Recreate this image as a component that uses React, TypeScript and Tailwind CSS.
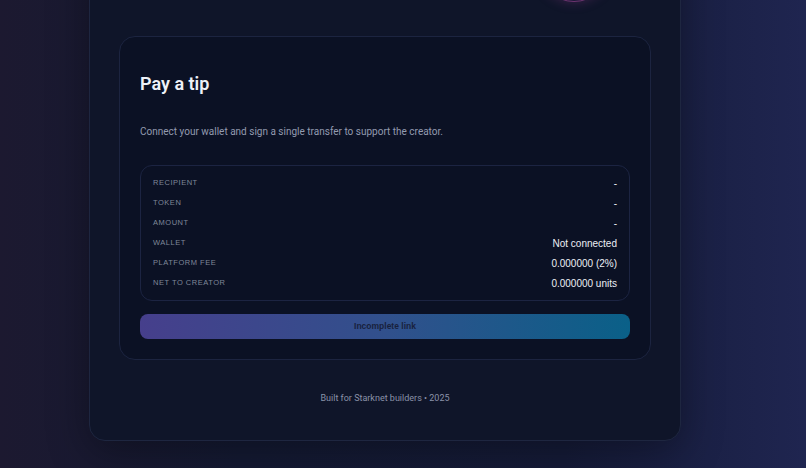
import React from "react";

const rows: { label: string; value: string }[] = [
  { label: "Recipient", value: "-" },
  { label: "Token", value: "-" },
  { label: "Amount", value: "-" },
  { label: "Wallet", value: "Not connected" },
  { label: "Platform fee", value: "0.000000 (2%)" },
  { label: "Net to creator", value: "0.000000 units" },
];

const App: React.FC = () => {
  return (
    <div className="h-[468px] w-[806px] overflow-hidden bg-[linear-gradient(90deg,#1c1930_0%,#141a33_30%,#151b38_70%,#1f2550_100%)] font-['Roboto',sans-serif]">
      <div className="-mt-[58px] ml-[89px] w-[592px] rounded-2xl border border-[#1e2640] bg-[#0f1529] px-[29px] pb-[34px] shadow-[0_10px_40px_rgba(0,0,0,0.35)]">
        {/* Header avatar (scrolled off) */}
        <div className="flex h-[59px] items-end justify-end pr-[41px]">
          <div className="h-[72px] w-[72px] shrink-0 rounded-full border border-[#6e3570] bg-[#1d1838] shadow-[0_0_12px_rgba(150,60,140,0.35)]" />
        </div>

        <div className="mt-[34px] rounded-2xl border border-[#1c2440] bg-[#0b1124] p-5">
          <h2 className="mt-[15px] text-[18px] font-semibold leading-6 text-[#eef1f8]">Pay a tip</h2>

          <p className="mt-[28px] text-[10px] leading-4 text-[#939bb0]">
            Connect your wallet and sign a single transfer to support the creator.
          </p>

          <div className="mt-[25px] rounded-xl border border-[#1c2442] bg-[#0b1124] px-3 py-[7px]">
            {rows.map((row) => (
              <div key={row.label} className="flex h-5 items-center justify-between">
                <span className="font-['Liberation_Sans',sans-serif] text-[7.5px] uppercase tracking-[0.07em] text-[#7f8799]">
                  {row.label}
                </span>
                <span className="pt-[1px] font-['Liberation_Sans',sans-serif] text-[10px] text-[#eceff5]">
                  {row.value}
                </span>
              </div>
            ))}
          </div>

          <button
            type="button"
            className="mt-[13px] flex h-[25px] w-full items-center justify-center rounded-lg bg-[linear-gradient(90deg,#463f8c_0%,#31508c_50%,#0a6088_100%)] font-['Liberation_Sans',sans-serif] text-[8.5px] font-bold text-[#18213d]"
          >
            Incomplete link
          </button>
        </div>

        <p className="mt-[30px] text-center text-[9px] leading-4 text-[#8a92a8]">
          Built for Starknet builders • 2025
        </p>
      </div>
    </div>
  );
};

export default App;
